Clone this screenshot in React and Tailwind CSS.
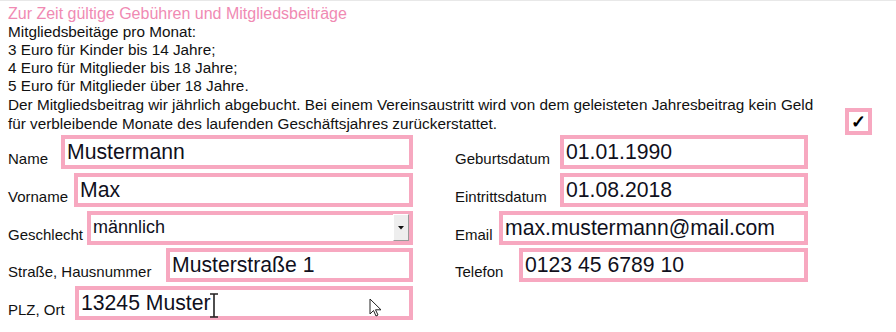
import React from 'react';

const PINK = 'border-[#f7a8c0]';

function Field({ label, labelW, value }) {
  return (
    <div className="flex h-[34px] items-end">
      <div className="shrink-0 text-[15px] leading-[18px] pb-[1px]" style={{ width: labelW }}>{label}</div>
      <div className={`flex-1 h-full border-4 ${PINK} bg-white flex items-center pl-[2px] text-[21.2px] text-[#10101c] whitespace-nowrap overflow-hidden`}>
        {value}
      </div>
    </div>
  );
}

function SelectField({ label, labelW, value }) {
  return (
    <div className="flex h-[34px] items-end">
      <div className="shrink-0 text-[15px] leading-[18px] pb-[1px]" style={{ width: labelW }}>{label}</div>
      <div className={`flex-1 h-full border-4 ${PINK} bg-white flex items-center text-[18px] text-[#10101c]`}>
        <span className="flex-1 pl-[2px]">{value}</span>
        <span className="w-[16px] h-[27px] bg-[#eeeeee] border border-t-white border-l-white border-r-[#9a9a9a] border-b-[#9a9a9a] flex items-center justify-center">
          <svg width="6" height="4" viewBox="0 0 6 4"><path d="M0 0h6L3 3.5z" fill="#111" /></svg>
        </span>
      </div>
    </div>
  );
}

export default function App() {
  return (
    <div className="relative w-[896px] h-[332px] overflow-hidden bg-white border-t border-[#e8e8e8] font-['Liberation_Sans',Arial,sans-serif] text-[#111]">
      <div className="pl-2 pt-[4px] text-[15.3px] leading-[18px]">
        <div className="text-[16px] text-[#f08ab3]">Zur Zeit gültige Gebühren und Mitgliedsbeiträge</div>
        <div>Mitgliedsbeitäge pro Monat:</div>
        <div>3 Euro für Kinder bis 14 Jahre;</div>
        <div>4 Euro für Mitglieder bis 18 Jahre;</div>
        <div>5 Euro für Mitglieder über 18 Jahre.</div>
        <div className="flex items-start">
          <p className="whitespace-nowrap leading-[19px]">
            Der Mitgliedsbeitrag wir jährlich abgebucht. Bei einem Vereinsaustritt wird von dem geleisteten Jahresbeitrag kein Geld
            <br />
            für verbleibende Monate des laufenden Geschäftsjahres zurückerstattet.
          </p>
          <div className={`ml-auto mr-[24px] mt-[13px] w-[27px] h-[27px] border-4 ${PINK} flex items-center justify-center text-[18px] font-bold leading-none text-black`}>✓</div>
        </div>
      </div>

      <div className="flex pl-2">
        <div className="w-[405px] flex flex-col gap-[3.75px]">
          <Field label="Name" labelW={53} value="Mustermann" />
          <Field label="Vorname" labelW={66} value="Max" />
          <SelectField label="Geschlecht" labelW={79} value="männlich" />
          <Field label="Straße, Hausnummer" labelW={158} value="Musterstraße 1" />
          <Field label="PLZ, Ort" labelW={67} value="13245 Muster" />
        </div>
        <div className="ml-[42px] w-[353px] flex flex-col gap-[3.75px]">
          <Field label="Geburtsdatum" labelW={105} value="01.01.1990" />
          <Field label="Eintrittsdatum" labelW={105} value="01.08.2018" />
          <Field label="Email" labelW={44} value="max.mustermann@mail.com" />
          <Field label="Telefon" labelW={64} value="0123 45 6789 10" />
        </div>
      </div>

      {/* text cursor */}
      <svg className="absolute left-[209px] top-[292px]" width="10" height="25" viewBox="0 0 10 25">
        <path d="M1 1h8M5 1v23M1 24h8" stroke="#222" strokeWidth="1.6" fill="none" />
      </svg>
      {/* mouse pointer */}
      <svg className="absolute left-[369px] top-[297px]" width="14" height="20" viewBox="0 0 14 20">
        <path d="M1 1v15l3.5-3.5 2.5 5.5 2-1-2.5-5.2H12z" fill="#fff" stroke="#222" strokeWidth="1" strokeLinejoin="round" />
      </svg>
    </div>
  );
}
